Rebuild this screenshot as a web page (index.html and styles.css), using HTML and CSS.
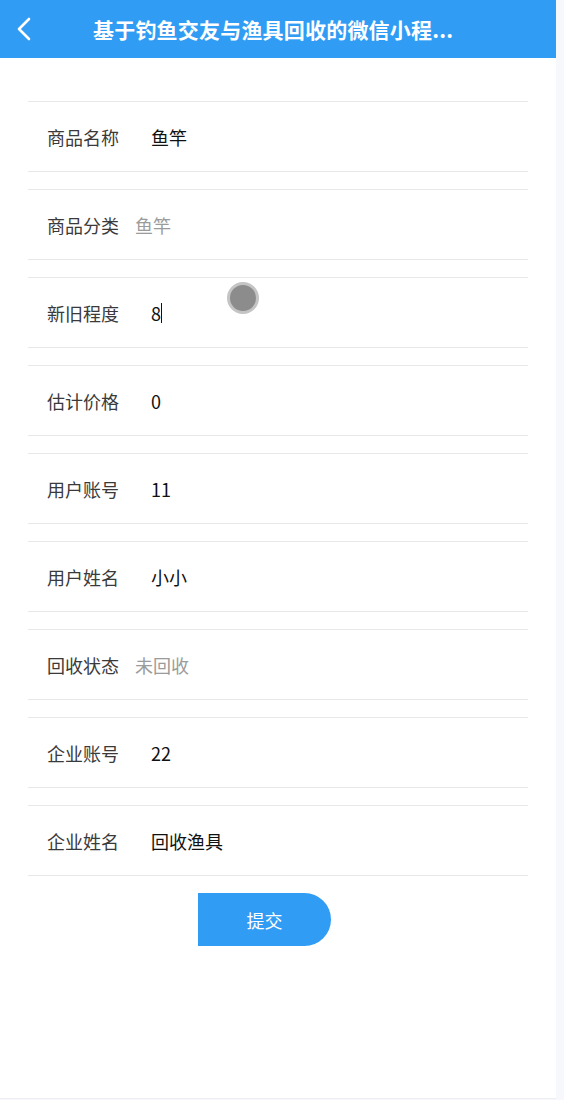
FILE: index.html
```html
<!DOCTYPE html>
<html lang="zh">
<head>
<meta charset="utf-8">
<link rel="stylesheet" href="styles.css">
</head>
<body>
<div class="page">
  <header class="nav">
    <svg class="back" width="16" height="24" viewBox="0 0 16 24"><path d="M13 2 L3 12 L13 22" fill="none" stroke="#fff" stroke-width="2.6" stroke-linecap="round" stroke-linejoin="round"/></svg>
    <div class="title">基于钓鱼交友与渔具回收的微信小程...</div>
  </header>
  <form class="form">
    <div class="row"><span class="label">商品名称</span><span class="value">鱼竿</span></div>
    <div class="row"><span class="label">商品分类</span><span class="picker">鱼竿</span></div>
    <div class="row"><span class="label">新旧程度</span><span class="value">8<i class="caret"></i></span><span class="touch"></span></div>
    <div class="row"><span class="label">估计价格</span><span class="value">0</span></div>
    <div class="row"><span class="label">用户账号</span><span class="value">11</span></div>
    <div class="row"><span class="label">用户姓名</span><span class="value">小小</span></div>
    <div class="row"><span class="label">回收状态</span><span class="picker">未回收</span></div>
    <div class="row"><span class="label">企业账号</span><span class="value">22</span></div>
    <div class="row"><span class="label">企业姓名</span><span class="value">回收渔具</span></div>
    <div class="actions"><button type="button" class="submit">提交</button></div>
  </form>
</div>
</body>
</html>
```

FILE: styles.css
```css
html, body {
  margin: 0;
  padding: 0;
}
body {
  background: #f6f8fc;
  font-family: "Noto Sans CJK SC", "Noto Sans", sans-serif;
}
.page {
  width: 556px;
  min-height: 1098px;
  background: #fff;
  border-bottom: 1px solid #eceef2;
}
.nav {
  height: 58px;
  background: #309cf4;
  display: flex;
  align-items: center;
  position: relative;
}
.back {
  margin-left: 16px;
  flex: none;
}
.title {
  position: absolute;
  left: 93px;
  white-space: nowrap;
  color: #fff;
  font-size: 21px;
  letter-spacing: 0.2px;
  font-weight: 700;
  line-height: 58px;
}
.form {
  padding: 43px 28px 0;
  display: flex;
  flex-direction: column;
  gap: 17px;
}
.row {
  height: 71px;
  box-sizing: border-box;
  border-top: 1px solid #e8e8e8;
  border-bottom: 1px solid #e8e8e8;
  display: flex;
  align-items: center;
  padding-left: 19px;
  position: relative;
  font-size: 18px;
}
.label {
  color: #3a3a3a;
  width: 88px;
  flex: none;
}
.value {
  color: #111;
  padding-left: 16px;
  display: flex;
  align-items: center;
}
.picker {
  color: #9b9b9b;
}
.caret {
  display: inline-block;
  width: 1px;
  height: 20px;
  background: #111;
}
.touch {
  position: absolute;
  left: 199px;
  top: 4px;
  width: 26px;
  height: 26px;
  border-radius: 50%;
  background: #8c8c8c;
  border: 3px solid #c4c4c4;
}
.actions {
  display: flex;
  justify-content: center;
  padding-right: 27px;
}
.submit {
  width: 133px;
  height: 53px;
  border: none;
  background: #309cf4;
  color: #fff;
  font-family: "Noto Sans CJK SC", sans-serif;
  font-size: 18px;
  border-radius: 0 27px 27px 0;
  padding: 0;
}
```
